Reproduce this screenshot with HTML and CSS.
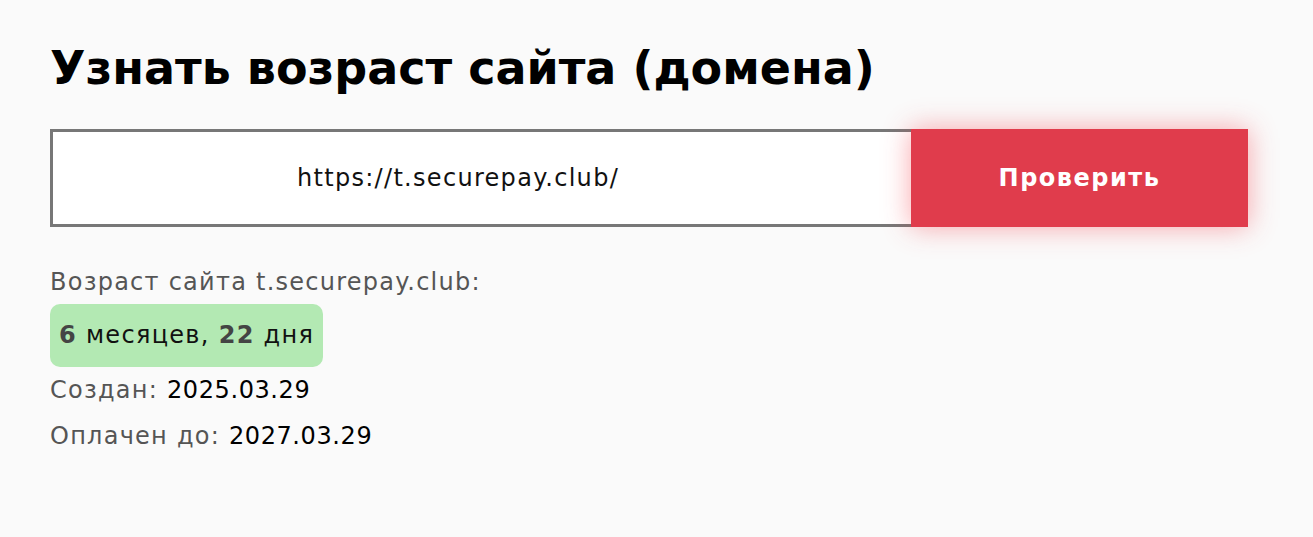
FILE: index.html
```html
<!DOCTYPE html>
<html lang="ru">
<head>
  <meta charset="UTF-8" />
  <meta name="viewport" content="width=device-width, initial-scale=1.0" />
  <title>Узнать возраст сайта</title>
  <link rel="stylesheet" href="styles.css">
</head>
<body>
  <div class="page">
    <h1>Узнать возраст сайта (домена)</h1>
    <form class="check-form" onsubmit="return false">
      <input type="text" class="url-input" value="https://t.securepay.club/" />
      <button type="submit" class="check-btn">Проверить</button>
    </form>

    <div class="results">
      <p class="label">Возраст сайта t.securepay.club:</p>
      <div class="age-badge"><b>6</b> месяцев, <b>22</b> дня</div>
      <p class="label">Создан: <span class="value">2025.03.29</span></p>
      <p class="label">Оплачен до: <span class="value">2027.03.29</span></p>
    </div>
  </div>
</body>
</html>
```

FILE: styles.css
```css
body {
  margin: 0;
  background-color: #fafafa;
  color: #000;
  font-family: "DejaVu Sans", "Noto Sans", sans-serif;
}
.page {
  padding: 38px 65px 0 50px;
}
h1 {
  margin: 0 0 31px;
  font-size: 46px;
  font-weight: 700;
  line-height: 60px;
}
.check-form {
  display: flex;
  width: 1198px;
  height: 98px;
}
.url-input {
  flex: 1;
  box-sizing: border-box;
  height: 98px;
  padding: 0 48px 0 0;
  border: 3px solid #777;
  border-right: none;
  background: #fff;
  text-align: center;
  font-family: inherit;
  font-size: 24px;
  letter-spacing: 1.3px;
  color: #111;
  outline: none;
}
.check-btn {
  width: 337px;
  height: 98px;
  border: none;
  background-color: #e03c4c;
  color: #fff;
  font-family: inherit;
  font-size: 24px;
  font-weight: 700;
  letter-spacing: 1.5px;
  box-shadow: 0 0 26px rgba(245, 60, 70, 0.45);
  cursor: pointer;
}
.results {
  margin-top: 32px;
}
.label {
  margin: 0;
  font-size: 24px;
  letter-spacing: 1.25px;
  line-height: 46px;
  color: #555;
}
.value {
  color: #000;
  letter-spacing: 0.6px;
}
.age-badge {
  display: inline-block;
  margin-top: -1px;
  padding: 0 9px;
  height: 63px;
  line-height: 63px;
  border-radius: 10px;
  background-color: #b3e9b3;
  font-size: 24px;
  letter-spacing: 1.3px;
  color: #111;
}
.age-badge b {
  color: #444;
}
```
